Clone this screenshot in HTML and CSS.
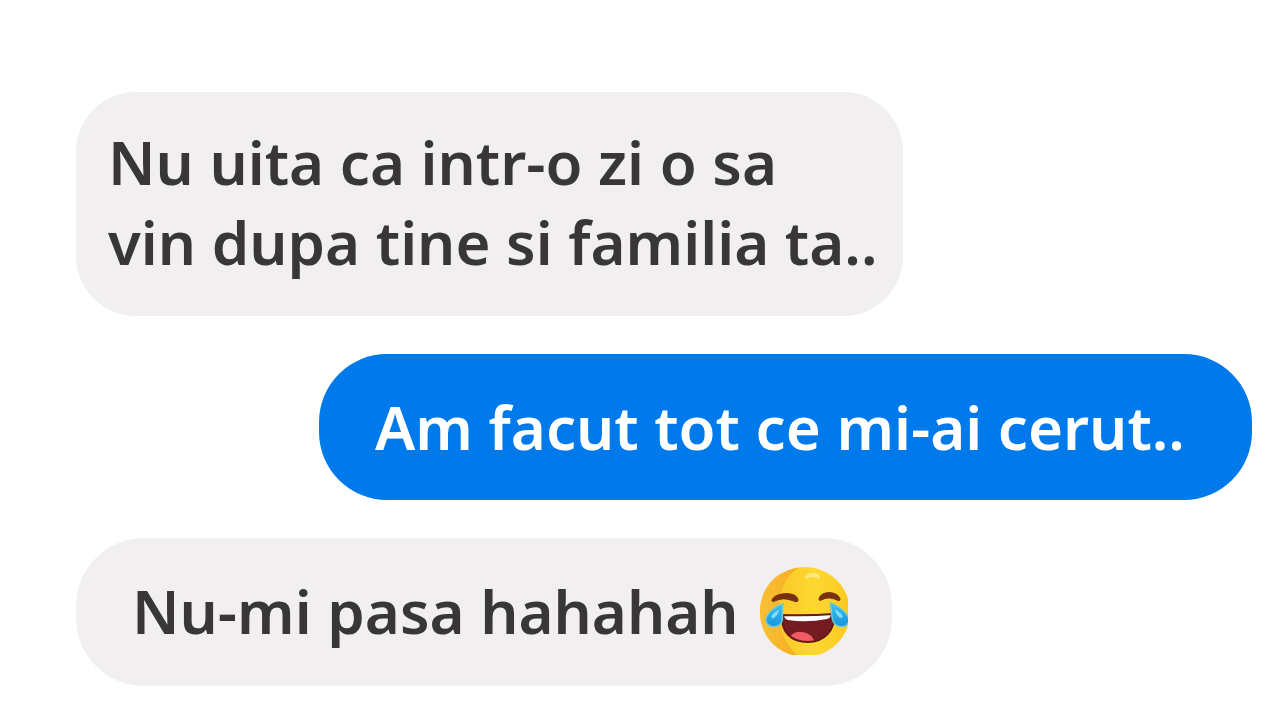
FILE: index.html
```html
<!DOCTYPE html>
<html lang="ro">
<head>
    <meta charset="UTF-8">
    <meta name="viewport" content="width=device-width, initial-scale=1.0">
    <title>Chat</title>
    <link rel="stylesheet" href="styles.css">
</head>
<body>

    <main class="chat">
        <p class="bubble received wide">Nu uita ca intr-o zi o sa<br>vin dupa tine si familia ta..</p>

        <p class="bubble sent">Am facut tot ce mi-ai cerut..</p>

        <p class="bubble received reply">
            <span>Nu-mi pasa hahahah</span>
            <svg class="emoji" viewBox="0 0 88 88" role="img" aria-label="Tears of joy">
                <defs>
                    <linearGradient id="face" x1="0" y1="0" x2="1" y2="0">
                        <stop offset="0.3" stop-color="#fbcb2b"/>
                        <stop offset="0.6" stop-color="#fdd831"/>
                        <stop offset="1" stop-color="#fbc920"/>
                    </linearGradient>
                    <linearGradient id="shade" x1="0" y1="0" x2="1" y2="0">
                        <stop offset="0" stop-color="#f9c034"/>
                        <stop offset="1" stop-color="#f6ae24"/>
                    </linearGradient>
                    <linearGradient id="tear" x1="0" y1="0" x2="0" y2="1">
                        <stop offset="0" stop-color="#3cc0ee"/>
                        <stop offset="1" stop-color="#1795e0"/>
                    </linearGradient>
                    <clipPath id="mouth">
                        <path d="M22 48Q47 49 74 47C75 64 64 75 48 75C30 75 21 64 22 48Z"/>
                    </clipPath>
                </defs>
                <circle cx="45" cy="45" r="45" fill="url(#face)"/>
                <path d="M38 1C15 4 0 22 0 45C0 68 16 86 38 89C26 79 20 64 19 47C18 27 24 10 38 1Z" fill="url(#shade)"/>
                <path d="M45 11C45 5 59 4 60 10C60 14 55 9 51 10C48 10 45 14 45 11Z" fill="#fbe97b"/>
                <!-- eyes -->
                <path d="M12 33C15 25 37 24 38 33C38 37 33 33 26 32C17 31 12 37 12 33Z" fill="#793012" stroke="#793012"/>
                <path d="M59 32C61 23 78 24 80 32C80 36 75 31 70 31C64 30 59 36 59 32Z" fill="#793012" stroke="#793012"/>
                <!-- mouth -->
                <g clip-path="url(#mouth)">
                    <path d="M20 45H76V77H20Z" fill="#751c22"/>
                    <path d="M24 48Q48 50 71 47Q71 51 67 52Q47 56 28 53Q24 52 24 48Z" fill="#fff"/>
                    <ellipse cx="42" cy="73" rx="12" ry="8" fill="#f15b63" transform="rotate(12 42 73)"/>
                </g>
                <path d="M22 48Q47 49 74 47C75 64 64 75 48 75C30 75 21 64 22 48Z" fill="none" stroke="#65171a" stroke-width="2"/>
                <!-- tears -->
                <path d="M23 37C17 38 5 47 6 54C8 62 20 61 22 54C23 49 22 43 23 37Z" fill="url(#tear)" stroke="#70cbd0" stroke-width="1.5"/>
                <path d="M19 43C14 45 10 49 12 51C14 52 18 48 19 43Z" fill="#7ddff8"/>
                <path d="M70 36C76 37 90 47 89 54C87 62 76 61 73 54C71 49 72 43 70 36Z" fill="url(#tear)" stroke="#70cbd0" stroke-width="1.5"/>
                <path d="M75 42C80 45 84 49 82 51C79 51 76 48 75 42Z" fill="#7ddff8"/>
            </svg>
        </p>
    </main>

</body>
</html>
```
FILE: styles.css
```css
* {
    margin: 0;
    padding: 0;
    box-sizing: border-box;
}

body {
    font-family: 'Noto Sans', 'Open Sans', sans-serif;
    background-color: #fff;
}

.chat {
    display: flex;
    flex-direction: column;
    gap: 38px;
    padding: 92px 28px 32px 76px;
}

.bubble {
    padding: 30px 32px 34px;
    border-radius: 60px;
    font-size: 60px;
    font-weight: 600;
    line-height: 80px;
    white-space: nowrap;
}

.received {
    background-color: #f1eff0;
    color: #383637;
}

.sent {
    margin-left: 243px;
    padding: 33px 56px;
    border-radius: 68px;
    background-color: #007aea;
    color: #fff;
}

.wide {
    margin-right: 349px;
}

.reply {
    display: flex;
    align-items: center;
    justify-content: space-between;
    margin-right: 360px;
    padding: 29px 44px 31px 56px;
    border-radius: 68px;
}

.emoji {
    width: 88px;
    height: 88px;
}
```
